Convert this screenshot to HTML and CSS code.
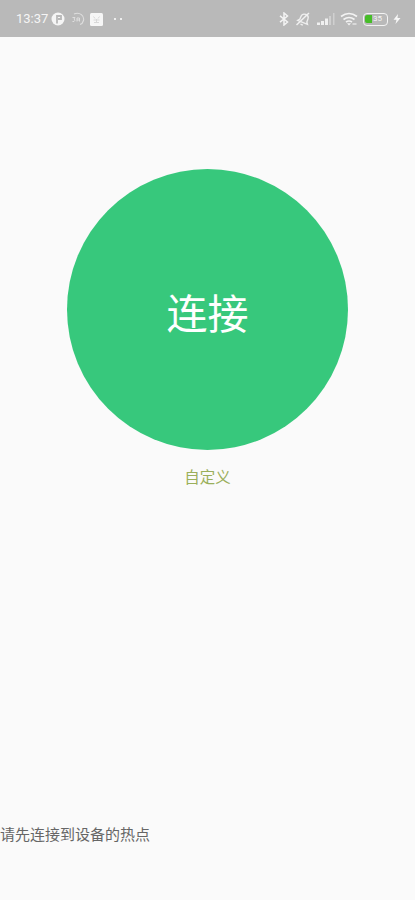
FILE: index.html
```html
<!DOCTYPE html>
<html lang="zh-CN">
<head>
    <meta charset="UTF-8">
    <meta name="viewport" content="width=device-width, initial-scale=1.0">
    <title>连接</title>
    <link rel="stylesheet" href="styles.css">
</head>
<body>
    <div class="status-bar">
        <div class="status-left">
            <span class="time">13:37</span>
            <svg class="icon-app" width="14" height="14" viewBox="0 0 14 14">
                <circle cx="7" cy="7" r="6.5" fill="#f5f5f5"/>
                <path d="M6 11.500V4h4v3H7" fill="none" stroke="#b9b9b9" stroke-width="1.800"/>
            </svg>
            <svg class="icon-speed" width="14" height="14" viewBox="0 0 14 14">
                <path d="M3 2C9 -.5 13.500 4 12.500 8.500 12 10.500 10.500 12 9 12.500" fill="none" stroke="#dedede" stroke-width="1.100"/>
                <path d="M1.500 5.500h2.500L3 7l1 1.200-1 1.300H1.500M6 9.500V6h2.500v3.500M6 8h2.500" fill="none" stroke="#dedede"/>
            </svg>
            <svg class="icon-note" width="13" height="13" viewBox="0 0 13 13">
                <rect width="13" height="13" rx="1.500" fill="#f6f6f6"/>
                <path d="M3.500 3.500l1.500 2M9.500 3.500L8 5.500M3.500 7h6M4 9.500h5M6.500 6v4" fill="none" stroke="#d8d8d8"/>
            </svg>
            <span class="dots"><i></i><i></i></span>
        </div>
        <div class="status-right">
            <svg class="icon-bluetooth" width="10" height="14" viewBox="0 0 10 14">
                <path d="M1 3.800l7.500 6.200L5 13V1l3.500 3L1 10.200" fill="none" stroke="#f3f3f3" stroke-width="1.500"/>
            </svg>
            <svg class="icon-mute" width="17" height="15" viewBox="0 0 17 15">
                <g transform="rotate(22 8.500 7.500)">
                    <path d="M3.500 10.500l1.500-2V6c0-2.500 1.500-4 3.800-4S12.500 3.500 12.500 6v2.500l1.500 2zM7.500 13h2.500" fill="none" stroke="#eee" stroke-width="1.400"/>
                </g>
                <path d="M1.500 13L14 1" stroke="#f0f0f0" stroke-width="1.500"/>
            </svg>
            <svg class="icon-signal" width="18" height="12" viewBox="0 0 18 12">
                <path d="M0 9.500h3V12H0zM4 8h3v4H4zM8 5.500h3V12H8z" fill="#f0f0f0"/>
                <path d="M12 3h2v9h-2zM16 0h1.500v12H16z" fill="#d0d0d0"/>
            </svg>
            <svg class="icon-wifi" width="18" height="14" viewBox="0 0 18 14">
                <path d="M1 4.500q8-6 16 0M3.500 7.500q5.500-4 11 0M6 10q3-2 6 0" fill="none" stroke="#f3f3f3" stroke-width="1.700"/>
                <path d="M7 11.200h4L9 13.500z" fill="#f3f3f3"/>
                <path d="M12.500 12h4" stroke="#e5e5e5" stroke-width="1.500"/>
            </svg>
            <span class="battery"><span class="level"></span><span class="percent">35</span></span>
            <svg class="icon-bolt" width="8" height="12" viewBox="0 0 8 12">
                <path d="M5 1L.5 6.800h3L2.500 11 7.500 5h-3z" fill="#f7f7f7"/>
            </svg>
        </div>
    </div>

    <div class="container">
        <button type="button" class="connect-button">连接</button>
        <a href="#" class="custom-link">自定义</a>
        <p class="hint">请先连接到设备的热点</p>
    </div>
</body>
</html>
```

FILE: styles.css
```css
body {
    margin: 0;
    height: 100vh;
    display: flex;
    flex-direction: column;
    overflow: hidden;
    background-color: #fafafa;
    font-family: Roboto, "Noto Sans CJK SC", sans-serif;
}

.status-bar {
    display: flex;
    justify-content: space-between;
    align-items: center;
    box-sizing: border-box;
    height: 37px;
    padding: 1px 14px 0 16px;
    background-color: #b9b9b9;
    color: #f5f5f5;
}

.status-left,
.status-right {
    display: flex;
    align-items: center;
}

.time {
    width: 35px;
    font-size: 13px;
    line-height: 16px;
}

.icon-speed {
    margin-left: 6px;
}

.icon-note {
    margin-left: 5px;
}

.dots {
    display: flex;
    gap: 4px;
    margin-left: 11px;
}

.dots i {
    width: 2px;
    height: 2px;
    background-color: #eee;
}

.icon-mute {
    margin-left: 6px;
    margin-right: 1px;
}

.icon-signal {
    margin-left: 4px;
}

.icon-wifi {
    margin-left: 5px;
}

.battery {
    display: flex;
    align-items: center;
    box-sizing: border-box;
    width: 25px;
    height: 13px;
    margin-left: 5px;
    padding: 1px;
    border: 1.5px solid #f3f3f3;
    border-radius: 4px;
}

.level {
    width: 7px;
    height: 8px;
    border-radius: 2px 0 0 2px;
    background-color: #46bd28;
}

.percent {
    margin-left: 1px;
    font-size: 8px;
    line-height: 8px;
}

.icon-bolt {
    margin-left: 5px;
}

.container {
    flex: 1;
    display: flex;
    flex-direction: column;
    align-items: center;
    padding-top: 132px;
}

.connect-button {
    width: 281px;
    height: 281px;
    padding: 2px 0 0;
    border: none;
    border-radius: 50%;
    background-color: #37c87c;
    color: white;
    font-family: inherit;
    font-size: 41px;
    cursor: pointer;
}

.custom-link {
    margin-top: 16px;
    color: #9aaf5b;
    font-size: 15.5px;
    line-height: 24px;
    text-decoration: none;
}

.hint {
    align-self: flex-start;
    margin: auto 0 53px;
    color: #666;
    font-size: 15px;
    line-height: 24px;
}
```
